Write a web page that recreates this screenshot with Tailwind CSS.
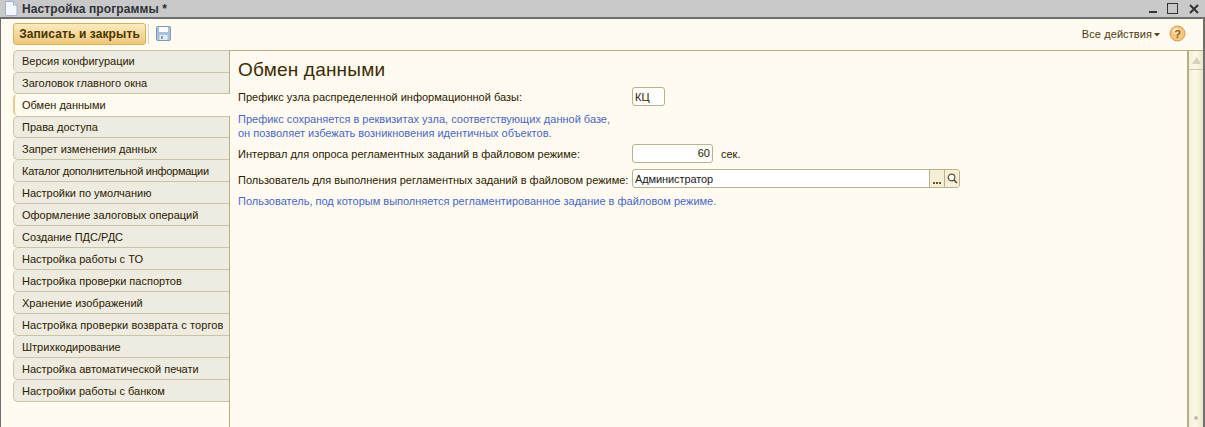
<!DOCTYPE html>
<html><head><meta charset="utf-8"><script src="https://cdn.jsdelivr.net/npm/@tailwindcss/browser@4"></script></head>
<body class="m-0">
<div class="w-[1205px] h-[427px] overflow-hidden flex flex-col bg-[#fffbf0] text-[11px] leading-[14px] text-[#2b2000] whitespace-nowrap font-['Liberation_Sans',sans-serif]">
  <div class="h-[19px] shrink-0 bg-[#c9c9c9] border-b-2 border-[#6e6e6e] flex items-center pl-[4px] pr-[6px]">
    <svg width="14" height="15" viewBox="0 0 14 15" class="mr-[4px]"><path d="M1.500 .5h8l3.500 3.500v10.500h-11.500z" fill="#f4f8fd" stroke="#9fb2cc"/><path d="M9.500 .5v3.500h3.500" fill="#d5e2f2" stroke="#9fb2cc"/></svg>
    <span class="font-bold text-[12px] tracking-[0.1px] text-[#2e3238]">Настройка программы *</span>
    <div class="ml-auto flex items-center">
      <svg width="9" height="11" viewBox="0 0 9 11" class="mr-[9px]"><rect x="0" y="8" width="8" height="2" fill="#333"/></svg>
      <svg width="11" height="11" viewBox="0 0 11 11" class="mr-[11px]"><rect x=".5" y=".5" width="10" height="10" fill="none" stroke="#333"/></svg>
      <svg width="10" height="10" viewBox="0 0 10 10"><path d="M1 1l8 8M9 1l-8 8" stroke="#333" stroke-width="2"/></svg>
    </div>
  </div>
  <div class="flex-1 flex flex-col border-l border-r-2 border-[#6e6e6e] min-h-0">
    <div class="h-[31px] shrink-0 flex items-center pl-[12px] pr-[17px] pb-[2px]">
      <button class="h-[22px] w-[133px] rounded-[3px] border border-[#d9b25f] bg-gradient-to-b from-[#fbeac0] to-[#eec878] font-bold text-[12px] tracking-[0.1px] text-[#4a3500]">Записать и закрыть</button>
      <div class="w-px h-[20px] bg-[#d8d2bc] ml-[2px] mr-[7px]"></div>
      <svg width="15" height="15" viewBox="0 0 15 15" class="mb-[1px]"><rect x=".5" y=".5" width="14" height="14" rx="1" fill="#a9c0d8" stroke="#7f9ab6"/><rect x="3" y="1" width="9" height="5" fill="#fff"/><rect x="3.500" y="9" width="8" height="5" fill="#e6ecf3"/><rect x="5" y="10" width="2" height="3" fill="#7f9ab6"/></svg>
      <div class="ml-auto flex items-center">
        <span class="text-[#4a3a10] tracking-[0.08px]">Все действия</span>
        <svg width="6" height="4" viewBox="0 0 6 4" class="ml-[2px] mr-[9px] mt-[2px]"><path d="M0 0h6l-3 3.500z" fill="#5a4410"/></svg>
        <svg width="17" height="17" viewBox="0 0 17 17"><circle cx="8.500" cy="8.500" r="7.500" fill="#f6c67f" stroke="#d99a4a"/><circle cx="7" cy="6" r="3" fill="#fde9c9"/><text x="8.500" y="12.500" text-anchor="middle" font-size="11" font-weight="700" fill="#8a5a14" font-family="Liberation Sans">?</text></svg>
      </div>
    </div>
    <div class="flex-1 flex min-h-0">
      <div class="w-[228px] shrink-0 flex flex-col items-stretch pl-[12px]">
        <div class="h-[22px] pb-[2px] flex items-center pl-[8px] bg-[#eeebe0] border border-r-0 border-[#c9c4a4] rounded-l-[5px] border-b-0">Версия конфигурации</div>
        <div class="h-[22px] flex items-center pl-[8px] bg-[#eeebe0] border border-r-0 border-[#c9c4a4] rounded-l-[5px]">Заголовок главного окна</div>
        <div class="h-[22px] flex items-center pl-[7px] bg-[#fffbf0] border-l-2 border-[#e8c98a] rounded-l-[5px] mr-[-1px] relative z-10">Обмен данными</div>
        <div class="h-[22px] flex items-center pl-[8px] bg-[#eeebe0] border border-r-0 border-[#c9c4a4] rounded-l-[5px]">Права доступа</div>
        <div class="h-[22px] pt-[1px] flex items-center pl-[8px] bg-[#eeebe0] border border-r-0 border-t-0 border-[#c9c4a4] rounded-l-[5px]">Запрет изменения данных</div>
        <div class="h-[22px] pt-[1px] flex items-center pl-[8px] bg-[#eeebe0] border border-r-0 border-t-0 border-[#c9c4a4] rounded-l-[5px] tracking-[-0.28px]">Каталог дополнительной информации</div>
        <div class="h-[22px] pt-[1px] flex items-center pl-[8px] bg-[#eeebe0] border border-r-0 border-t-0 border-[#c9c4a4] rounded-l-[5px]">Настройки по умолчанию</div>
        <div class="h-[22px] pt-[1px] flex items-center pl-[8px] bg-[#eeebe0] border border-r-0 border-t-0 border-[#c9c4a4] rounded-l-[5px]">Оформление залоговых операций</div>
        <div class="h-[22px] pt-[1px] flex items-center pl-[8px] bg-[#eeebe0] border border-r-0 border-t-0 border-[#c9c4a4] rounded-l-[5px]">Создание ПДС/РДС</div>
        <div class="h-[22px] pt-[1px] flex items-center pl-[8px] bg-[#eeebe0] border border-r-0 border-t-0 border-[#c9c4a4] rounded-l-[5px]">Настройка работы с ТО</div>
        <div class="h-[22px] pt-[1px] flex items-center pl-[8px] bg-[#eeebe0] border border-r-0 border-t-0 border-[#c9c4a4] rounded-l-[5px]">Настройка проверки паспортов</div>
        <div class="h-[22px] pt-[1px] flex items-center pl-[8px] bg-[#eeebe0] border border-r-0 border-t-0 border-[#c9c4a4] rounded-l-[5px]">Хранение изображений</div>
        <div class="h-[22px] pt-[1px] flex items-center pl-[8px] bg-[#eeebe0] border border-r-0 border-t-0 border-[#c9c4a4] rounded-l-[5px] tracking-[0.11px]">Настройка проверки возврата с торгов</div>
        <div class="h-[22px] pt-[1px] flex items-center pl-[8px] bg-[#eeebe0] border border-r-0 border-t-0 border-[#c9c4a4] rounded-l-[5px]">Штрихкодирование</div>
        <div class="h-[22px] pt-[1px] flex items-center pl-[8px] bg-[#eeebe0] border border-r-0 border-t-0 border-[#c9c4a4] rounded-l-[5px]">Настройка автоматической печати</div>
        <div class="h-[22px] pt-[1px] flex items-center pl-[8px] bg-[#eeebe0] border border-r-0 border-t-0 border-[#c9c4a4] rounded-l-[5px]">Настройки работы с банком</div>
      </div>
      <div class="flex-1 flex border-t border-l border-[#b5ae88] min-w-0">
        <div class="flex-1 flex flex-col pl-[8px] pt-[8px] min-w-0">
          <h1 class="text-[19px] tracking-[0.2px] leading-[22px] font-normal text-[#3d2c00] h-[25px]">Обмен данными</h1>
          <div class="h-[25px] flex items-center">
            <span class="w-[394px]">Префикс узла распределенной информационной базы:</span>
            <div class="w-[33px] h-[19px] bg-white border border-[#b9b28a] rounded-[3px] pl-[2px] flex items-center">КЦ</div>
          </div>
          <p class="text-[#4a66c8] mt-[3px]">Префикс сохраняется в реквизитах узла, соответствующих данной базе,<br>он позволяет избежать возникновения идентичных объектов.</p>
          <div class="h-[22px] mt-[2px] flex items-center">
            <span class="w-[394px] pt-[1px]">Интервал для опроса регламентных заданий в файловом режиме:</span>
            <div class="w-[81px] h-[19px] bg-white border border-[#b9b28a] rounded-[3px] pr-[2px] flex items-center justify-end">60</div>
            <span class="ml-[8px] pt-[1px]">сек.</span>
          </div>
          <div class="h-[22px] mt-[3px] flex items-center">
            <span class="w-[394px] pt-[3px]">Пользователь для выполнения регламентных заданий в файловом режиме:</span>
            <div class="w-[328px] h-[19px] bg-white border border-[#b9b28a] rounded-[3px] flex items-stretch overflow-hidden">
              <span class="flex-1 pl-[2px] pt-[1px] flex items-center text-[#222] tracking-[-0.1px]">Администратор</span>
              <span class="w-[15px] border-l border-[#b9b28a] bg-[#f5efd8] flex items-end justify-center pb-[3px] gap-[1px]"><i class="w-[2px] h-[2px] bg-[#6a5510]"></i><i class="w-[2px] h-[2px] bg-[#6a5510]"></i><i class="w-[2px] h-[2px] bg-[#6a5510]"></i></span>
              <span class="w-[15px] border-l border-[#b9b28a] bg-[#f5efd8] flex items-center justify-center"><svg width="11" height="11" viewBox="0 0 11 11"><circle cx="4.500" cy="4.500" r="3.300" fill="#fff" stroke="#5a5030" stroke-width="1.200"/><path d="M7 7l3 3" stroke="#5a5030" stroke-width="1.600"/></svg></span>
            </div>
          </div>
          <p class="text-[#4a66c8] mt-[5px]">Пользователь, под которым выполняется регламентированное задание в файловом режиме.</p>
        </div>
        <div class="w-[16px] shrink-0 border-l-2 border-[#b5ae88] flex flex-col bg-gradient-to-r from-[#f4f0dc] via-[#fbf8e8] to-[#ece6c4]">
          <div class="h-[19px] border-b border-[#cfc9a8] flex items-center justify-center"><svg width="9" height="7" viewBox="0 0 9 7"><path d="M4.500 0l4.500 7h-9z" fill="#d5d1bd"/></svg></div>
          <div class="flex-1"></div>
          <div class="h-[7px] flex justify-center mb-[4px]"><i class="w-[4px] h-[4px] rounded-full bg-[#c5c0ac]"></i></div>
        </div>
      </div>
    </div>
  </div>
</div>
</body></html>
